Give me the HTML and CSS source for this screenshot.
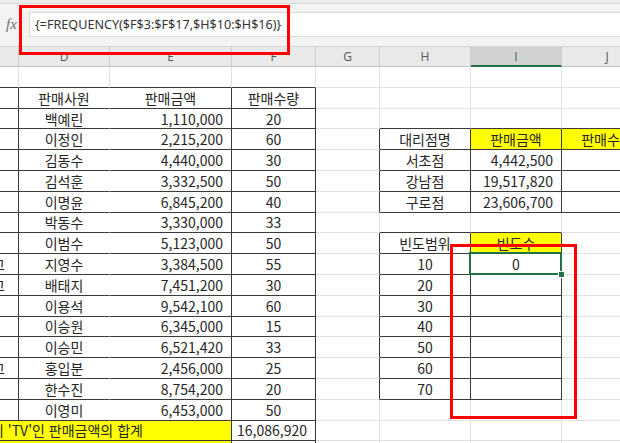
FILE: index.html
```html
<!DOCTYPE html>
<html lang="ko">
<head>
<meta charset="utf-8">
<title>FREQUENCY</title>
<link rel="stylesheet" href="styles.css">
</head>
<body>
<div class="app">
  <div class="ribbon-edge"></div>
  <div class="fbar">
    <div class="fx">fx</div>
    <div class="finput">{=FREQUENCY($F$3:$F$17,$H$10:$H$16)}</div>
  </div>
  <div class="sheet">
    <div class="c ch"></div><div class="c ch">D</div><div class="c ch">E</div><div class="c ch">F</div><div class="c ch">G</div><div class="c ch">H</div><div class="c ch sel-col">I</div><div class="c ch">J</div>

    <div class="c db"></div><div class="c db"></div><div class="c db"></div><div class="c db"></div><div class="c"></div><div class="c"></div><div class="c"></div><div class="c"></div>

    <div class="c t"></div><div class="c t nr">판매사원</div><div class="c t">판매금액</div><div class="c t">판매수량</div><div class="c"></div><div class="c"></div><div class="c"></div><div class="c"></div>

    <div class="c t"></div><div class="c t nr">백예린</div><div class="c t r">1,110,000</div><div class="c t">20</div><div class="c"></div><div class="c db"></div><div class="c db"></div><div class="c db"></div>

    <div class="c t"></div><div class="c t nr">이정인</div><div class="c t r">2,215,200</div><div class="c t">60</div><div class="c dr"></div><div class="c t">대리점명</div><div class="c t y">판매금액</div><div class="c t y">판매수량</div>

    <div class="c t"></div><div class="c t nr">김동수</div><div class="c t r">4,440,000</div><div class="c t">30</div><div class="c dr"></div><div class="c t">서초점</div><div class="c t r">4,442,500</div><div class="c t"></div>

    <div class="c t"></div><div class="c t nr">김석훈</div><div class="c t r">3,332,500</div><div class="c t">50</div><div class="c dr"></div><div class="c t">강남점</div><div class="c t r">19,517,820</div><div class="c t"></div>

    <div class="c t"></div><div class="c t nr">이명윤</div><div class="c t r">6,845,200</div><div class="c t">40</div><div class="c dr"></div><div class="c t">구로점</div><div class="c t r">23,606,700</div><div class="c t"></div>

    <div class="c t"></div><div class="c t nr">박동수</div><div class="c t r">3,330,000</div><div class="c t">33</div><div class="c"></div><div class="c db"></div><div class="c db"></div><div class="c"></div>

    <div class="c t"></div><div class="c t nr">이범수</div><div class="c t r">5,123,000</div><div class="c t">50</div><div class="c dr"></div><div class="c t">빈도범위</div><div class="c t y">빈도수</div><div class="c"></div>

    <div class="c t cut"><span>고</span></div><div class="c t nr">지영수</div><div class="c t r">3,384,500</div><div class="c t">55</div><div class="c dr"></div><div class="c t">10</div><div class="c t sel">0</div><div class="c"></div>

    <div class="c t cut"><span>고</span></div><div class="c t nr">배태지</div><div class="c t r">7,451,200</div><div class="c t">30</div><div class="c dr"></div><div class="c t">20</div><div class="c t"></div><div class="c"></div>

    <div class="c t"></div><div class="c t nr">이용석</div><div class="c t r">9,542,100</div><div class="c t">60</div><div class="c dr"></div><div class="c t">30</div><div class="c t"></div><div class="c"></div>

    <div class="c t"></div><div class="c t nr">이승원</div><div class="c t r">6,345,000</div><div class="c t">15</div><div class="c dr"></div><div class="c t">40</div><div class="c t"></div><div class="c"></div>

    <div class="c t"></div><div class="c t nr">이승민</div><div class="c t r">6,521,420</div><div class="c t">33</div><div class="c dr"></div><div class="c t">50</div><div class="c t"></div><div class="c"></div>

    <div class="c t cut"><span>고</span></div><div class="c t nr">홍입분</div><div class="c t r">2,456,000</div><div class="c t">25</div><div class="c dr"></div><div class="c t">60</div><div class="c t"></div><div class="c"></div>

    <div class="c t"></div><div class="c t nr">한수진</div><div class="c t r">8,754,200</div><div class="c t">20</div><div class="c dr"></div><div class="c t">70</div><div class="c t"></div><div class="c"></div>

    <div class="c t"></div><div class="c t nr">이영미</div><div class="c t r">6,453,000</div><div class="c t">50</div><div class="c"></div><div class="c"></div><div class="c"></div><div class="c"></div>

    <div class="c t y span3 lead"><span>이 'TV'인 판매금액의 합계</span></div><div class="c t r">16,086,920</div><div class="c"></div><div class="c"></div><div class="c"></div><div class="c"></div>

    <div class="c t y span3"></div><div class="c t"></div><div class="c"></div><div class="c"></div><div class="c"></div><div class="c"></div>
  </div>
  <div class="redbox r1"></div>
  <div class="redbox r2"></div>
</div>
</body>
</html>
```

FILE: styles.css
```css
html, body {
  margin: 0;
  padding: 0;
}

body {
  width: 620px;
  height: 443px;
  overflow: hidden;
  background: #ffffff;
  font-family: "Noto Sans CJK KR", "Noto Sans", sans-serif;
  color: #262626;
}

.app {
  position: relative;
  width: 620px;
  height: 443px;
  overflow: hidden;
}

.ribbon-edge {
  height: 3px;
  background: #ececec;
  border-bottom: 1px solid #d8d8d8;
}

.fbar {
  height: 42px;
  box-sizing: border-box;
  padding-top: 8px;
  background: #f3f3f3;
  display: flex;
  align-items: flex-start;
}

.fx {
  width: 29px;
  height: 25px;
  box-sizing: border-box;
  padding-left: 6px;
  display: flex;
  align-items: center;
  font-family: "Liberation Serif", serif;
  font-style: italic;
  font-size: 15px;
  color: #6e6e6e;
}

.finput {
  flex: 1;
  height: 25px;
  box-sizing: border-box;
  background: #ffffff;
  border: 1px solid #d9d9d9;
  border-right: none;
  padding-left: 5px;
  font-family: "Noto Sans", sans-serif;
  font-size: 12.6px;
  line-height: 24px;
  color: #333333;
  white-space: nowrap;
}

.sheet {
  display: grid;
  grid-template-columns: 19px 91px 122px 84px 64px 91px 91px 91px;
  grid-template-rows: 21px repeat(19, 20.8px);
  width: 653px;
}

.c {
  box-sizing: border-box;
  border-right: 1px solid #e0e0e0;
  border-bottom: 1px solid #e0e0e0;
  display: flex;
  align-items: center;
  justify-content: center;
  font-size: 14px;
  white-space: nowrap;
  overflow: hidden;
  min-width: 0;
}

.ch {
  background: #e9e9e9;
  border-top: 1px solid #d6d6d6;
  border-right-color: #cdcdcd;
  border-bottom-color: #c4c4c4;
  font-family: "Open Sans", sans-serif;
  font-size: 12px;
  color: #555555;
}

.ch.sel-col {
  background: #d2d2d2;
  color: #217346;
  border-bottom: 2px solid #217346;
}

.r {
  justify-content: flex-end;
  padding-right: 8px;
}

.t {
  border-right-color: #3a3a3a;
  border-bottom-color: #3a3a3a;
}

.dr {
  border-right-color: #3a3a3a;
}

.db {
  border-bottom-color: #3a3a3a;
}

.nr {
  border-right-color: transparent;
}

.y {
  background: #ffff00;
}

.span3 {
  grid-column: span 3;
}

.lead {
  justify-content: flex-start;
}

.lead span {
  margin-left: -9px;
}

.cut {
  justify-content: flex-start;
}

.cut span {
  margin-left: -8px;
}

.sel {
  position: relative;
  overflow: visible;
  z-index: 1;
}

.sel::after {
  content: "";
  position: absolute;
  left: -2px;
  top: -2px;
  right: -1px;
  bottom: -1px;
  border: 2px solid #217346;
}

.sel::before {
  content: "";
  position: absolute;
  right: -4px;
  bottom: -4px;
  width: 5px;
  height: 5px;
  background: #217346;
  border: 1px solid #ffffff;
  z-index: 2;
}

.redbox {
  position: absolute;
  box-sizing: border-box;
  border: 3px solid #ff0000;
}

.r1 {
  left: 19px;
  top: 5px;
  width: 271px;
  height: 50px;
}

.r2 {
  left: 450px;
  top: 244px;
  width: 127px;
  height: 175px;
}
```
